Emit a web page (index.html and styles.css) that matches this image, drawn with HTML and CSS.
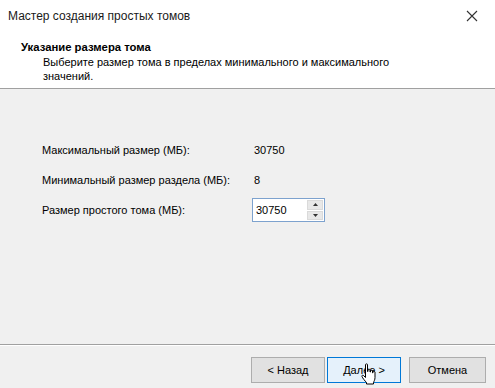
FILE: index.html
```html
<!DOCTYPE html>
<html>
<head>
    <meta charset="UTF-8">
    <title>Мастер создания простых томов</title>
    <link rel="stylesheet" href="styles.css">
</head>
<body>
    <div class="window">
        <div class="titlebar">
            <div class="titlebar__text">Мастер создания простых томов</div>
            <svg class="titlebar__close" width="12" height="12" viewBox="0 0 12 12">
                <path d="M1 1 L11 11 M11 1 L1 11" stroke="#333" stroke-width="1.1" fill="none"/>
            </svg>
        </div>
        <div class="header">
            <div class="header__title">Указание размера тома</div>
            <div class="header__sub">Выберите размер тома в пределах минимального и максимального<br>значений.</div>
        </div>
        <div class="content">
            <div class="row">
                <div class="row__label">Максимальный размер (МБ):</div>
                <div class="row__value">30750</div>
            </div>
            <div class="row">
                <div class="row__label">Минимальный размер раздела (МБ):</div>
                <div class="row__value">8</div>
            </div>
            <div class="row">
                <div class="row__label">Размер простого тома (МБ):</div>
                <div class="spin">
                    <div class="spin__input">30750</div>
                    <div class="spin__btns">
                        <div class="spin__btn">
                            <svg width="5" height="3" viewBox="0 0 5 3"><path d="M0 3 L2.5 0 L5 3 Z" fill="#333"/></svg>
                        </div>
                        <div class="spin__btn">
                            <svg width="5" height="3" viewBox="0 0 5 3"><path d="M0 0 L2.5 3 L5 0 Z" fill="#333"/></svg>
                        </div>
                    </div>
                </div>
            </div>
        </div>
        <div class="footer">
            <button class="btn">&lt; Назад</button>
            <button class="btn btn--hover">Далее &gt;
                <svg class="cursor" width="16" height="22" viewBox="0 0 16 22">
                    <path d="M4.5 1.5 C4.5 0.7 6.5 0.7 6.5 1.5 L6.5 8.5 L7 8.5 L7 6.8 C7 6 9 6 9 6.8 L9 9 L9.5 9 L9.5 7.8 C9.5 7 11.5 7 11.5 7.8 L11.5 9.8 L12 9.8 L12 9 C12 8.2 14 8.2 14 9 L14 14.5 C14 17 13 18 12.5 19.5 L12.5 21 L5.5 21 L5.5 19.5 C4 18 1.5 15 1 13.5 C0.6 12.4 1.8 11.8 2.6 12.6 L4.5 14.5 Z" fill="#fff" stroke="#000" stroke-width="1"/>
                </svg>
            </button>
            <button class="btn btn--cancel">Отмена</button>
        </div>
    </div>
</body>
</html>
```

FILE: styles.css
```css
* {
    box-sizing: border-box;
}
body {
    margin: 0;
    font-family: 'Liberation Sans', Arial, sans-serif;
    font-size: 11px;
    color: #000;
}
.window {
    width: 495px;
    height: 388px;
    background-color: #f0f0f0;
    display: flex;
    flex-direction: column;
}
.titlebar {
    height: 32px;
    background-color: #fff;
    display: flex;
    align-items: center;
    justify-content: space-between;
    padding: 0 17px 0 8px;
}
.titlebar__text {
    font-size: 12px;
    color: #1a1a1a;
}
.header {
    height: 57px;
    background-color: #fff;
    border-bottom: 1px solid #a0a0a0;
    padding: 8px 0 0 21px;
    line-height: 14px;
}
.header__title {
    font-weight: bold;
    font-size: 11.3px;
}
.header__sub {
    margin-top: 1px;
    padding-left: 22px;
}
.content {
    flex: 1;
    padding: 49px 0 0 42px;
    display: flex;
    flex-direction: column;
    gap: 6px;
    border-bottom: 1px solid #a0a0a0;
}
.row {
    height: 24px;
    display: flex;
    align-items: center;
}
.row__label {
    width: 210px;
}
.row__value {
    padding-left: 2px;
}
.spin {
    width: 73px;
    height: 24px;
    border: 1px solid #7da2ce;
    background-color: #fff;
    display: flex;
}
.spin__input {
    flex: 1;
    padding-left: 3px;
    line-height: 22px;
}
.spin__btns {
    width: 18px;
    padding: 1px;
    display: flex;
    flex-direction: column;
    gap: 1px;
}
.spin__btn {
    flex: 1;
    background-color: #e8e8e8;
    border: 1px solid #dadada;
    display: flex;
    align-items: center;
    justify-content: center;
}
.footer {
    height: 43px;
    border-top: 1px solid #fff;
    display: flex;
    justify-content: flex-end;
    padding: 11px 9px 0 0;
    gap: 2px;
}
.btn {
    position: relative;
    width: 74px;
    height: 26px;
    border: 1px solid #adadad;
    background-color: #e1e1e1;
    font-family: 'Liberation Sans', Arial, sans-serif;
    font-size: 11px;
    color: #000;
    padding: 0;
}
.btn--hover {
    background-color: #e5f1fb;
    border-color: #0078d7;
}
.btn--cancel {
    width: 77px;
    margin-left: 6px;
}
.cursor {
    position: absolute;
    left: 33px;
    top: 5px;
}
```
